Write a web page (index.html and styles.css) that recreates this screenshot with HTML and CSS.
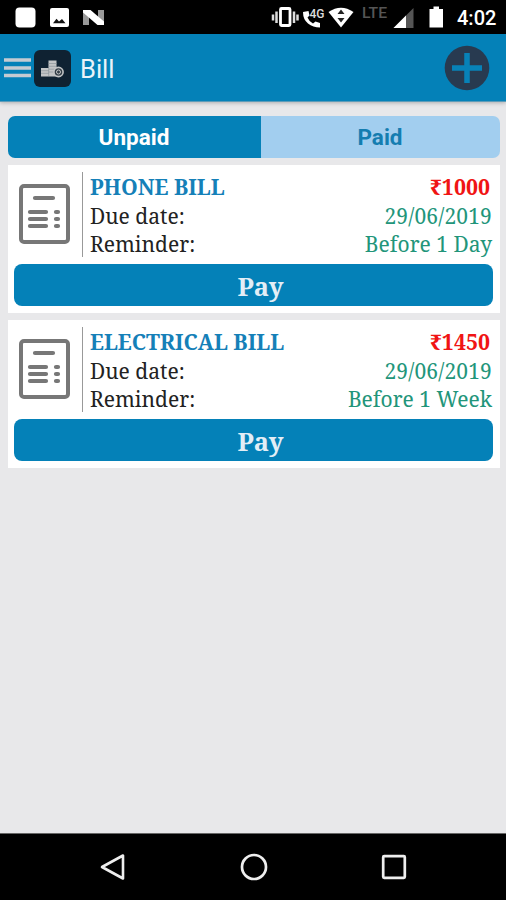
FILE: index.html
```html
<!DOCTYPE html>
<html lang="en">
<head>
<meta charset="utf-8">
<title>Bill</title>
<link rel="stylesheet" href="styles.css">
</head>
<body>
<div class="status">
  <svg width="120" height="34" viewBox="0 0 120 34">
    <rect x="15.500" y="7.500" width="20" height="20" rx="4" fill="#fff"/>
    <rect x="50" y="8" width="19" height="19" rx="2" fill="#fff"/>
    <path d="M53 23.300l3.500-4.500 2.500 2.700 3-2.500 3.500 4.300z" fill="#111"/>
    <path d="M83 10h6v15h-6zM98 10h6v14h-6z" fill="#999"/>
    <path d="M83 10h7.500L104 21.500V25h-6.500L83 12.500z" fill="#fff"/>
  </svg>
  <svg width="190" height="34" viewBox="270 0 190 34">
    <path d="M273 14.500v6M276.500 11.500v11.500M294 11.500v11.500M297.500 14.500v6" stroke="#ddd" stroke-width="2.500"/>
    <rect x="280.500" y="8.500" width="9.500" height="17" rx="1" fill="none" stroke="#fff" stroke-width="2.800"/>
    <path d="M303 12q0 7.500 5 11.500t12 4v-4.500l-4.500-1.500-2.500 2q-4-2-5.500-6l2-2-1-4.500z" fill="#fff"/>
    <text class="g4" x="309.500" y="18" textLength="15" lengthAdjust="spacingAndGlyphs">4G</text>
    <path d="M328.500 12Q341 3.500 353.500 12L341 27.500z" fill="#fff"/>
    <path d="M337.500 14l3.500-4.500 3.500 4.500zM337.500 18h7l-3.500 4.500z" fill="#222"/>
    <text class="lte" x="362" y="18" textLength="25" lengthAdjust="spacingAndGlyphs">LTE</text>
    <path d="M393.500 28l20-20v20z" fill="#555"/>
    <path d="M393.500 28l12.500-12.500V28z" fill="#fff"/>
    <path d="M429.500 9h4V6.500h5.500V9h4v18.500h-13.500z" fill="#fff"/>
  </svg>
  <span class="time">4:02</span>
</div>
<header class="bar">
  <svg class="menu" width="28" height="20" viewBox="0 0 28 20"><path d="M0 2h27M0 10h27M0 17.500h27" stroke="#c4cbd2" stroke-width="3.500"/></svg>
  <svg class="logo" width="37" height="37" viewBox="0 0 37 37">
    <rect width="37" height="37" rx="6" fill="#0f2232"/>
    <path d="M7 18h8v8.500H7zM14.500 10.500h8v16h-8z" fill="#c3c5c6"/>
    <path d="M7 20.700h8M7 23.300h8M14.500 13.500h8M14.500 16.300h8M14.500 19.200h7M14.500 22h6M14.700 18v8" stroke="#8d959b" stroke-width=".7"/>
    <circle cx="24.500" cy="22" r="4.600" fill="#343f48" stroke="#c3c5c6" stroke-width="1.600"/>
    <circle cx="24.500" cy="22" r="2" fill="none" stroke="#c3c5c6"/>
  </svg>
  <h1>Bill</h1>
  <svg class="add" width="46" height="46" viewBox="0 0 46 46"><circle cx="23" cy="23" r="22.300" fill="#283a50"/><path d="M23 8v30M8 23h30" stroke="#0782b8" stroke-width="5.500"/></svg>
</header>
<main>
  <div class="tabs"><div class="tab on">Unpaid</div><div class="tab">Paid</div></div>
  <section class="card">
    <div class="info">
      <svg class="doc" width="51" height="60" viewBox="0 0 51 60"><rect x="2" y="2" width="47" height="56" rx="3" fill="none" stroke="#777" stroke-width="4"/><path d="M16 14h18M11 28h16M11 35h16M11 42h16M37 28h2M37 35h2M37 42h2" stroke="#777" stroke-width="4.200" stroke-linecap="round"/></svg>
      <div class="rows">
        <div class="row head"><b class="name">PHONE BILL</b><b class="price">₹1000</b></div>
        <div class="row"><span>Due date:</span><span class="val date">29/06/2019</span></div>
        <div class="row"><span>Reminder:</span><span class="val">Before 1 Day</span></div>
      </div>
    </div>
    <div class="pay">Pay</div>
  </section>
  <section class="card">
    <div class="info">
      <svg class="doc" width="51" height="60" viewBox="0 0 51 60"><rect x="2" y="2" width="47" height="56" rx="3" fill="none" stroke="#777" stroke-width="4"/><path d="M16 14h18M11 28h16M11 35h16M11 42h16M37 28h2M37 35h2M37 42h2" stroke="#777" stroke-width="4.200" stroke-linecap="round"/></svg>
      <div class="rows">
        <div class="row head"><b class="name">ELECTRICAL BILL</b><b class="price">₹1450</b></div>
        <div class="row"><span>Due date:</span><span class="val date">29/06/2019</span></div>
        <div class="row"><span>Reminder:</span><span class="val">Before 1 Week</span></div>
      </div>
    </div>
    <div class="pay">Pay</div>
  </section>
</main>
<nav class="nav">
  <svg width="28" height="28" viewBox="0 0 28 28"><path d="M3 14L24 2.500v23z" fill="none" stroke="#eee" stroke-width="2.600" stroke-linejoin="round"/></svg>
  <svg width="28" height="28" viewBox="0 0 28 28"><circle cx="14" cy="14" r="12" fill="none" stroke="#eee" stroke-width="2.700"/></svg>
  <svg width="28" height="28" viewBox="0 0 28 28"><rect x="3.200" y="3.200" width="21.600" height="21.600" rx="1" fill="none" stroke="#eee" stroke-width="2.700"/></svg>
</nav>
</body>
</html>
```
FILE: styles.css
```css
* { box-sizing: border-box; }
body { margin: 0; width: 506px; height: 900px; display: flex; flex-direction: column; background: #e8e8ea; font-family: Roboto, sans-serif; overflow: hidden; }
svg { display: block; flex: none; }
.status { height: 34px; background: #000; display: flex; align-items: center; color: #fff; }
.status svg:nth-child(2) { margin-left: 150px; }
.g4 { font: 500 13px Roboto, sans-serif; fill: #ddd; }
.lte { font: 500 15px Roboto, sans-serif; fill: #555; }
.time { margin-left: -3px; font-size: 20px; font-weight: 500; line-height: 34px; padding-top: 2px; }
.bar { height: 68px; background: #0481b8; display: flex; align-items: center; padding: 0 16px 0 4px; border-bottom: 1px solid #5d9cb9; box-shadow: 0 1px 4px rgba(0, 0, 0, .25); }
.menu { margin-top: 1px; }
.logo { margin: 1px 0 0 2px; }
h1 { margin: 3px 0 0 9px; font-size: 25.500px; font-weight: 400; line-height: 30px; color: #e9f3f9; flex: 1; }
.add { margin-top: 1px; }
main { flex: 1; padding: 14px 6.500px 0 7.500px; }
.tabs { display: flex; height: 42px; border-radius: 7px; overflow: hidden; margin-bottom: 7px; }
.tab { width: 239px; background: #a2ceef; color: #147db0; font-size: 22.500px; font-weight: 700; line-height: 43px; text-align: center; }
.tab.on { width: 253px; background: #0481b8; color: #fff; }
.card { background: #fff; height: 148px; margin-bottom: 7px; padding: 7px 6.500px; font-family: "Noto Serif", "DejaVu Serif Condensed", "DejaVu Serif", serif; }
.info { display: flex; height: 85px; }
.doc { margin: 12px 12px 0 5px; }
.rows { flex: 1; border-left: 1px solid #999; padding-left: 7px; }
.row { display: flex; justify-content: space-between; height: 28px; line-height: 31px; font-size: 21px; color: #222; white-space: nowrap; }
.row.head { height: 29px; line-height: 30px; font-size: 21.300px; }
.name { color: #1580b8; }
.price { color: #f01414; margin-right: 3px; }
.val { color: #22957a; margin-right: 1px; }
.date { letter-spacing: .15px; }
.pay { margin-top: 7px; height: 42px; border-radius: 8px; background: #0481b8; color: #e3eef6; font-size: 25.500px; font-weight: 700; line-height: 44px; padding-left: 14px; text-align: center; }
.nav { height: 67px; background: #000; border-top: 1px solid #666; display: flex; justify-content: space-between; align-items: center; padding: 0 98px 0 99px; }
```
